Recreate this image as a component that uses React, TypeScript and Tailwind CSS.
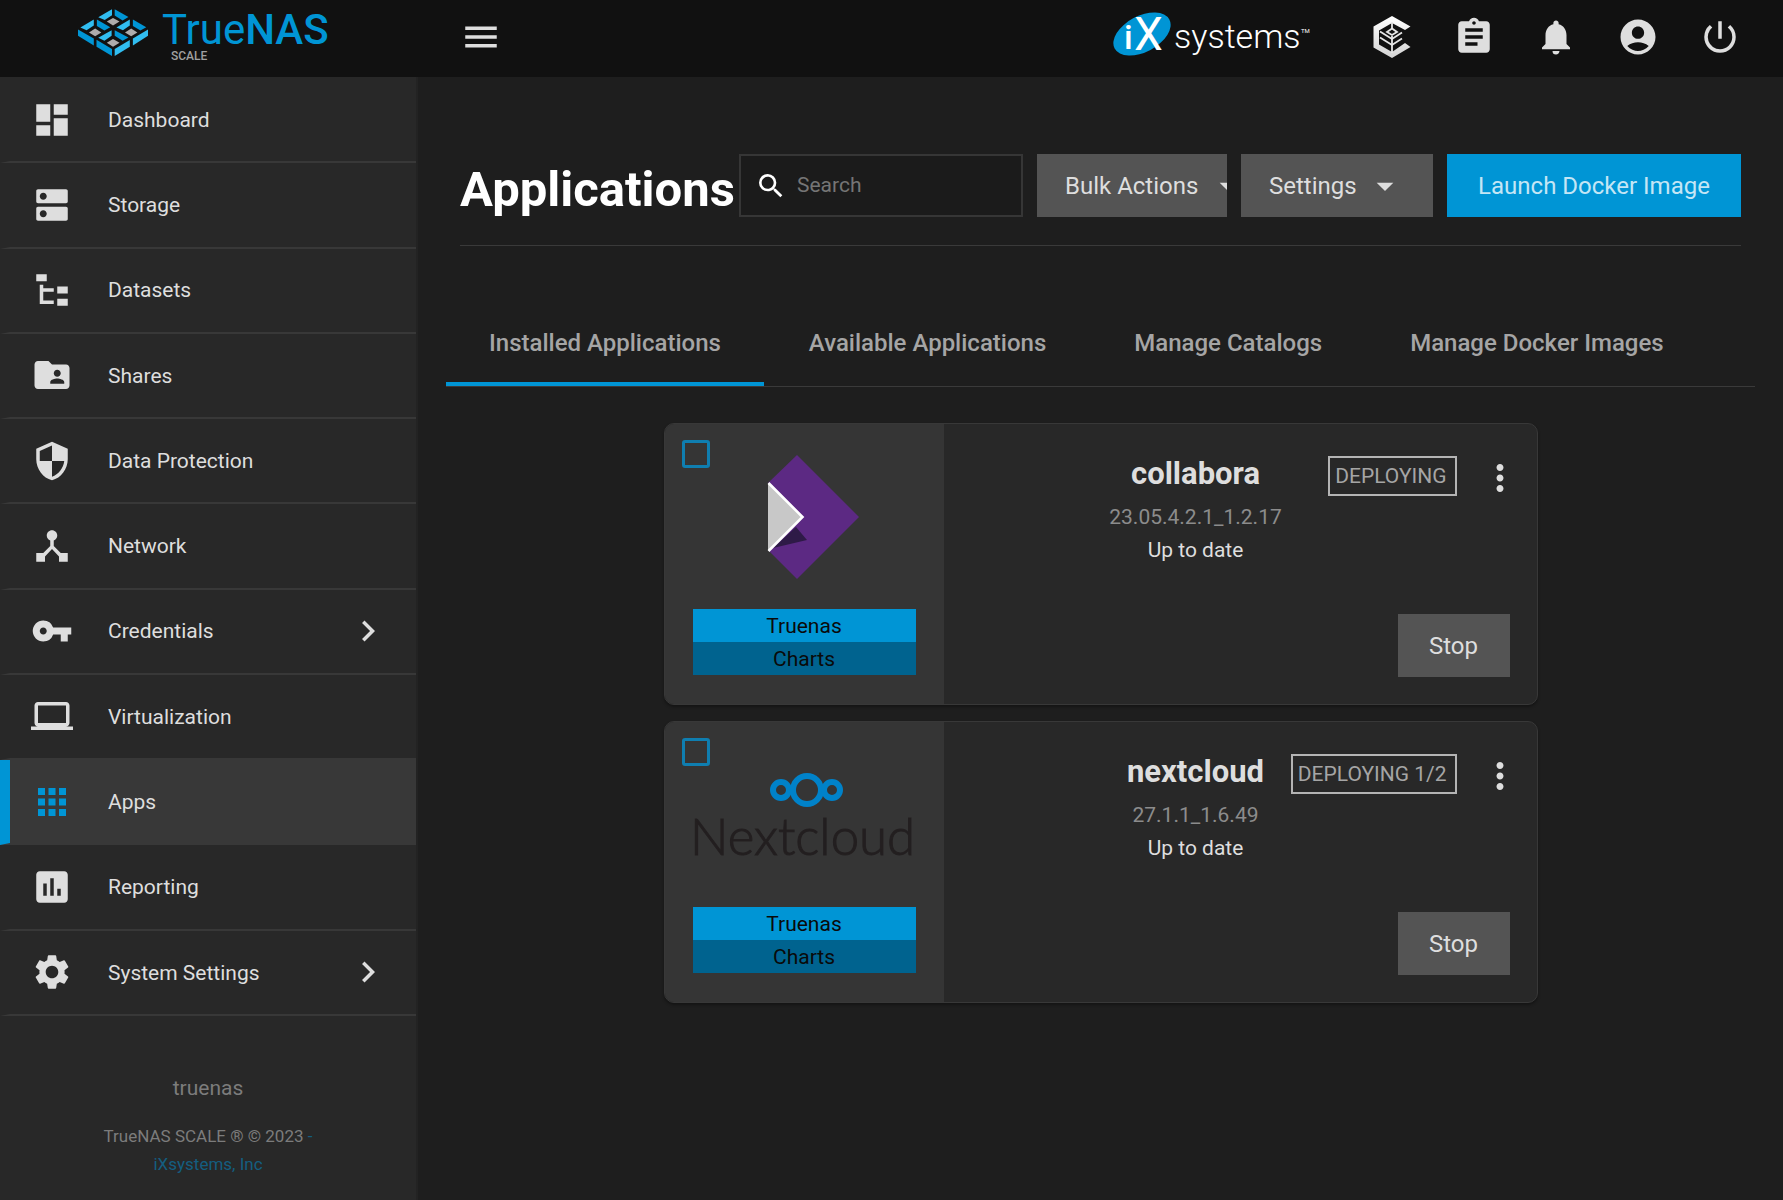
import type { ComponentType, ReactNode } from "react";
import {
  MdAccountCircle,
  MdApps,
  MdArrowDropDown,
  MdAssessment,
  MdAssignment,
  MdChevronRight,
  MdComputer,
  MdDashboard,
  MdDeviceHub,
  MdDns,
  MdFolderShared,
  MdMenu,
  MdMoreVert,
  MdNotifications,
  MdPowerSettingsNew,
  MdSearch,
  MdSecurity,
  MdSettings,
  MdVpnKey,
} from "react-icons/md";

type IconType = ComponentType<{ size?: number | string; className?: string }>;

function FileTreeIcon({ size = 24, className }: { size?: number | string; className?: string }) {
  return (
    <svg viewBox="0 0 24 24" width={size} height={size} fill="currentColor" className={className} aria-hidden="true">
      <path d="M3 3h6v4H3V3zm12 7h6v4h-6v-4zm0 7h6v4h-6v-4zm-2-4H7v5h6v2H5V9h2v2h6v2z" />
    </svg>
  );
}

function TrueNasMark() {
  return (
    <svg viewBox="226 26 204 142" preserveAspectRatio="none" className="h-[47px] w-[70px]" aria-hidden="true">
      <g fill="#31bdf0">
        <path d="M285 51 325 27V45L304 59Z" />
        <path d="M233 82 272 58V76L251 90Z" />
        <path d="M338 82 377 58V76L357 90Z" />
        <path d="M285 113 324 90V107L303 122Z" />
        <path d="M333 147 377 120V140L333 168Z" />
        <path d="M386 115 430 88V107L386 136Z" />
      </g>
      <g fill="#0095d5">
        <path d="M333 27 373 50 356 61 333 46Z" />
        <path d="M281 58 320 81 303 91 281 77Z" />
        <path d="M386 58 425 81 408 91 386 77Z" />
        <path d="M333 90 373 112 356 122 333 107Z" />
        <path d="M226 88 272 115V136L226 107Z" />
        <path d="M280 119 325 147V168L280 140Z" />
      </g>
      <g fill="#aeacac">
        <path d="M328 53 347 64 328 76 310 64Z" />
        <path d="M276 85 294 97 276 108 258 97Z" />
        <path d="M381 85 399 97 381 108 363 97Z" />
        <path d="M328 117 347 128 328 140 310 128Z" />
      </g>
    </svg>
  );
}

function IxSystemsLogo() {
  return (
    <svg viewBox="0 0 198 77" className="h-[77px] w-[198px]" role="img" aria-label="iXsystems">
      <ellipse cx="30" cy="34" rx="31" ry="18" transform="rotate(-28 30 34)" fill="#0095d5" />
      <g fill="#fff" className="font-['Roboto']">
        <text x="12" y="49" fontSize="34" fontWeight="500">i</text>
        <text x="22" y="50" fontSize="46" fontWeight="400">X</text>
        <text x="62" y="48" fontSize="34" fontWeight="300">systems</text>
        <text x="189" y="33" fontSize="6">TM</text>
      </g>
    </svg>
  );
}

function TrueCommandIcon() {
  return (
    <svg viewBox="0 0 38 42" width="38" height="42" aria-hidden="true">
      <defs>
        <linearGradient id="command-shade" x1="0" y1="0" x2="0" y2="1">
          <stop offset="0" stopColor="#fff" />
          <stop offset="1" stopColor="#d4d4d4" />
        </linearGradient>
      </defs>
      <path d="M19 0 37.500 10.500 32 14 19 7 6 14.500V28.500L19 36 32 27 37.500 31 19 42 .5 31.500V10.500Z" fill="url(#command-shade)" />
      <g fill="none" stroke="#e6e6e6" strokeWidth="1.800">
        <path d="M19 6v7M19 20v17" />
        <path d="M19 12.500 24 16 19 19 14 16Z" />
        <path d="M7 15.500 19 23 29 16.500M7 21.500 19 29 29 22.500" />
      </g>
    </svg>
  );
}

function CollaboraLogo() {
  return (
    <svg viewBox="0 0 223 124" className="h-[124px] w-full" role="img" aria-label="Collabora">
      <path d="M104 0 166 62 104 124 75 95V28Z" fill="#5c2983" />
      <path d="M103 72 114 85 80 93Z" fill="#2e1a47" />
      <path d="M75 28 109 62 75 96Z" fill="#c8c8c8" />
      <path d="M75.500 28 109.500 62 75.500 96" fill="none" stroke="#fff" strokeWidth="2.600" />
    </svg>
  );
}

function NextcloudLogo() {
  return (
    <svg viewBox="0 0 223 124" className="h-[124px] w-full overflow-visible" role="img" aria-label="Nextcloud">
      <g fill="none" stroke="#0082c9" strokeWidth="6">
        <circle cx="88" cy="37" r="8" />
        <circle cx="114" cy="37" r="14" />
        <circle cx="139" cy="37" r="8" />
      </g>
      <text x="-3" y="102" fontSize="51" fontWeight="300" fill="#231f20" stroke="#231f20" className="font-['Lato']">
        Nextcloud
      </text>
    </svg>
  );
}

const navItems: { label: string; icon: IconType; active?: boolean; nested?: boolean }[] = [
  { label: "Dashboard", icon: MdDashboard },
  { label: "Storage", icon: MdDns },
  { label: "Datasets", icon: FileTreeIcon },
  { label: "Shares", icon: MdFolderShared },
  { label: "Data Protection", icon: MdSecurity },
  { label: "Network", icon: MdDeviceHub },
  { label: "Credentials", icon: MdVpnKey, nested: true },
  { label: "Virtualization", icon: MdComputer },
  { label: "Apps", icon: MdApps, active: true },
  { label: "Reporting", icon: MdAssessment },
  { label: "System Settings", icon: MdSettings, nested: true },
];

const headerActions: { label: string; icon: ReactNode }[] = [
  { label: "TrueCommand", icon: <TrueCommandIcon /> },
  { label: "Tasks", icon: <MdAssignment size={42} /> },
  { label: "Notifications", icon: <MdNotifications size={42} /> },
  { label: "Account", icon: <MdAccountCircle size={42} /> },
  { label: "Power", icon: <MdPowerSettingsNew size={42} /> },
];

const tabs = ["Installed Applications", "Available Applications", "Manage Catalogs", "Manage Docker Images"];

const apps = [
  { name: "collabora", version: "23.05.4.2.1_1.2.17", status: "DEPLOYING", logo: <CollaboraLogo /> },
  { name: "nextcloud", version: "27.1.1_1.6.49", status: "DEPLOYING 1/2", logo: <NextcloudLogo /> },
];

function Header() {
  return (
    <header className="flex h-[77px] shrink-0 bg-[#111111] text-[#dedede]">
      <a href="#" className="flex w-[418px] shrink-0 items-start gap-[14px] pl-[78px]" aria-label="TrueNAS SCALE">
        <span className="pt-[9px]">
          <TrueNasMark />
        </span>
        <span className="flex flex-col pt-[11px]">
          <span className="text-[42px] leading-[38px] text-[#0095d5]">
            True<span className="font-medium">NAS</span>
          </span>
          <span className="pl-[9px] text-xs leading-[14px] font-medium text-[#a0a0a0]">SCALE</span>
        </span>
      </a>
      <div className="flex grow items-center justify-between pr-[22px] pl-[42px]">
        <button type="button" aria-label="Toggle menu" className="pb-1">
          <MdMenu size={42} />
        </button>
        <div className="flex items-center">
          <div className="mr-[41px]">
            <IxSystemsLogo />
          </div>
          {headerActions.map((action) => (
            <button key={action.label} type="button" aria-label={action.label} className="flex w-[82px] justify-center pb-1">
              {action.icon}
            </button>
          ))}
        </div>
      </div>
    </header>
  );
}

function Sidebar() {
  return (
    <aside className="flex w-[418px] shrink-0 flex-col border-r-2 border-[#232323] bg-[#282828] text-[21px] text-[#dedede]">
      <nav className="flex grow flex-col pt-px">
        {navItems.map(({ label, icon: Icon, active, nested }) => (
          <a
            key={label}
            href="#"
            className={
              active
                ? "flex min-h-[60px] grow basis-0 items-center gap-[35px] border-b-2 border-l-[10px] border-b-[#383838] border-l-[#0095d5] bg-[#383838] pr-[27px] pl-[21px]"
                : "flex min-h-[60px] grow basis-0 items-center gap-[35px] border-b-2 border-l-[10px] border-b-[#383838] border-l-transparent pr-[27px] pl-[21px]"
            }
          >
            <Icon size={42} className={active ? "text-[#0095d5]" : ""} />
            <span className="grow pt-0.5">{label}</span>
            {nested && <MdChevronRight size={42} />}
          </a>
        ))}
      </nav>
      <footer className="px-[90px] pt-[58px] pb-[22px] text-center text-[#7c7c7c]">
        <p className="leading-7">truenas</p>
        <p className="mt-5 text-[17px] leading-7">
          TrueNAS SCALE ® © 2023{" "}
          <a href="#" className="text-[#145e80]">
            - <br />
            iXsystems, Inc
          </a>
        </p>
      </footer>
    </aside>
  );
}

function Toolbar() {
  return (
    <div className="mx-[14px] flex items-center gap-[14px] border-b border-[#3a3a3a] pb-7">
      <h1 className="-mr-[14px] grow pt-2 text-[49px] leading-[54px] font-bold text-white">Applications</h1>
      <label className="flex h-[63px] w-[284px] items-center gap-[10px] border-2 border-[#363636] bg-[#1b1b1b] pl-[14px]">
        <MdSearch size={32} className="shrink-0 text-white" />
        <input
          type="search"
          placeholder="Search"
          aria-label="Search"
          className="w-full min-w-0 bg-transparent text-[21px] outline-none placeholder:text-[#757575]"
        />
      </label>
      <button
        type="button"
        className="flex h-[63px] w-[190px] items-center gap-[10px] overflow-hidden bg-[#545454] pl-7 text-2xl whitespace-nowrap text-[#dedede]"
      >
        Bulk Actions
        <MdArrowDropDown size={40} className="shrink-0" />
      </button>
      <button type="button" className="flex h-[63px] w-[192px] items-center gap-2 bg-[#545454] pl-7 text-2xl text-[#dedede]">
        Settings
        <MdArrowDropDown size={40} className="shrink-0" />
      </button>
      <button type="button" className="h-[63px] w-[294px] bg-[#0095d5] text-2xl text-[#c4e6f5]">
        Launch Docker Image
      </button>
    </div>
  );
}

function Tabs() {
  return (
    <div role="tablist" className="mt-[57px] flex gap-0.5 border-b border-[#3a3a3a]">
      {tabs.map((tab, index) => (
        <button
          key={tab}
          type="button"
          role="tab"
          aria-selected={index === 0}
          className={
            index === 0
              ? "h-[83px] border-b-4 border-[#0095d5] px-[43px] text-2xl font-medium text-[#a5a5a5]"
              : "h-[83px] border-b-4 border-transparent px-[43px] text-2xl font-medium text-[#a5a5a5]"
          }
        >
          {tab}
        </button>
      ))}
    </div>
  );
}

function AppCard({ name, version, status, logo }: (typeof apps)[number]) {
  return (
    <article className="flex w-full overflow-hidden rounded-[10px] border border-[#383838] bg-[#282828] shadow-[0_2px_3px_rgba(0,0,0,0.35)]">
      <div className="relative w-[279px] shrink-0 bg-[#353535] px-7 pt-[31px] pb-[29px]">
        <input
          type="checkbox"
          aria-label={`Select ${name}`}
          className="absolute top-4 left-[17px] size-7 appearance-none rounded-[3px] border-[3px] border-[#0f7eb0]"
        />
        {logo}
        <div className="mt-[30px] text-center text-[21px] leading-[31px] text-[#0a0a0a]">
          <p className="bg-[#0095d5] pt-0.5">Truenas</p>
          <p className="bg-[#00638f] pt-0.5">Charts</p>
        </div>
      </div>
      <div className="flex grow flex-col justify-between pt-[30px] pb-[27px]">
        <div className="grid grid-cols-[1fr_188px_167px_80px] items-start">
          <div className="col-start-2 text-center text-[21px] leading-[33px] text-[#dedede]">
            <h2 className="mb-[7px] text-[31px] leading-10 font-bold">{name}</h2>
            <p className="text-[#8c8c8c]">{version}</p>
            <p>Up to date</p>
          </div>
          <span className="mt-0.5 justify-self-end border-2 border-[#b4b4b4] pr-2 pl-[5px] text-[21px] leading-9 whitespace-nowrap text-[#a5a5a5]">
            {status}
          </span>
          <button type="button" aria-label={`More actions for ${name}`} className="mt-[3px] mr-4 justify-self-end text-[#dedede]">
            <MdMoreVert size={42} />
          </button>
        </div>
        <button type="button" className="mr-[27px] h-[63px] w-28 self-end bg-[#545454] text-2xl text-[#dedede]">
          Stop
        </button>
      </div>
    </article>
  );
}

export default function App() {
  return (
    <div className="flex min-h-screen flex-col bg-[#1e1e1e] font-['Roboto',sans-serif]">
      <Header />
      <div className="flex grow">
        <Sidebar />
        <main className="min-w-0 grow px-7 pt-[77px]">
          <Toolbar />
          <Tabs />
          <section className="mx-auto mt-9 flex max-w-[874px] flex-col gap-4">
            {apps.map((app) => (
              <AppCard key={app.name} {...app} />
            ))}
          </section>
        </main>
      </div>
    </div>
  );
}
